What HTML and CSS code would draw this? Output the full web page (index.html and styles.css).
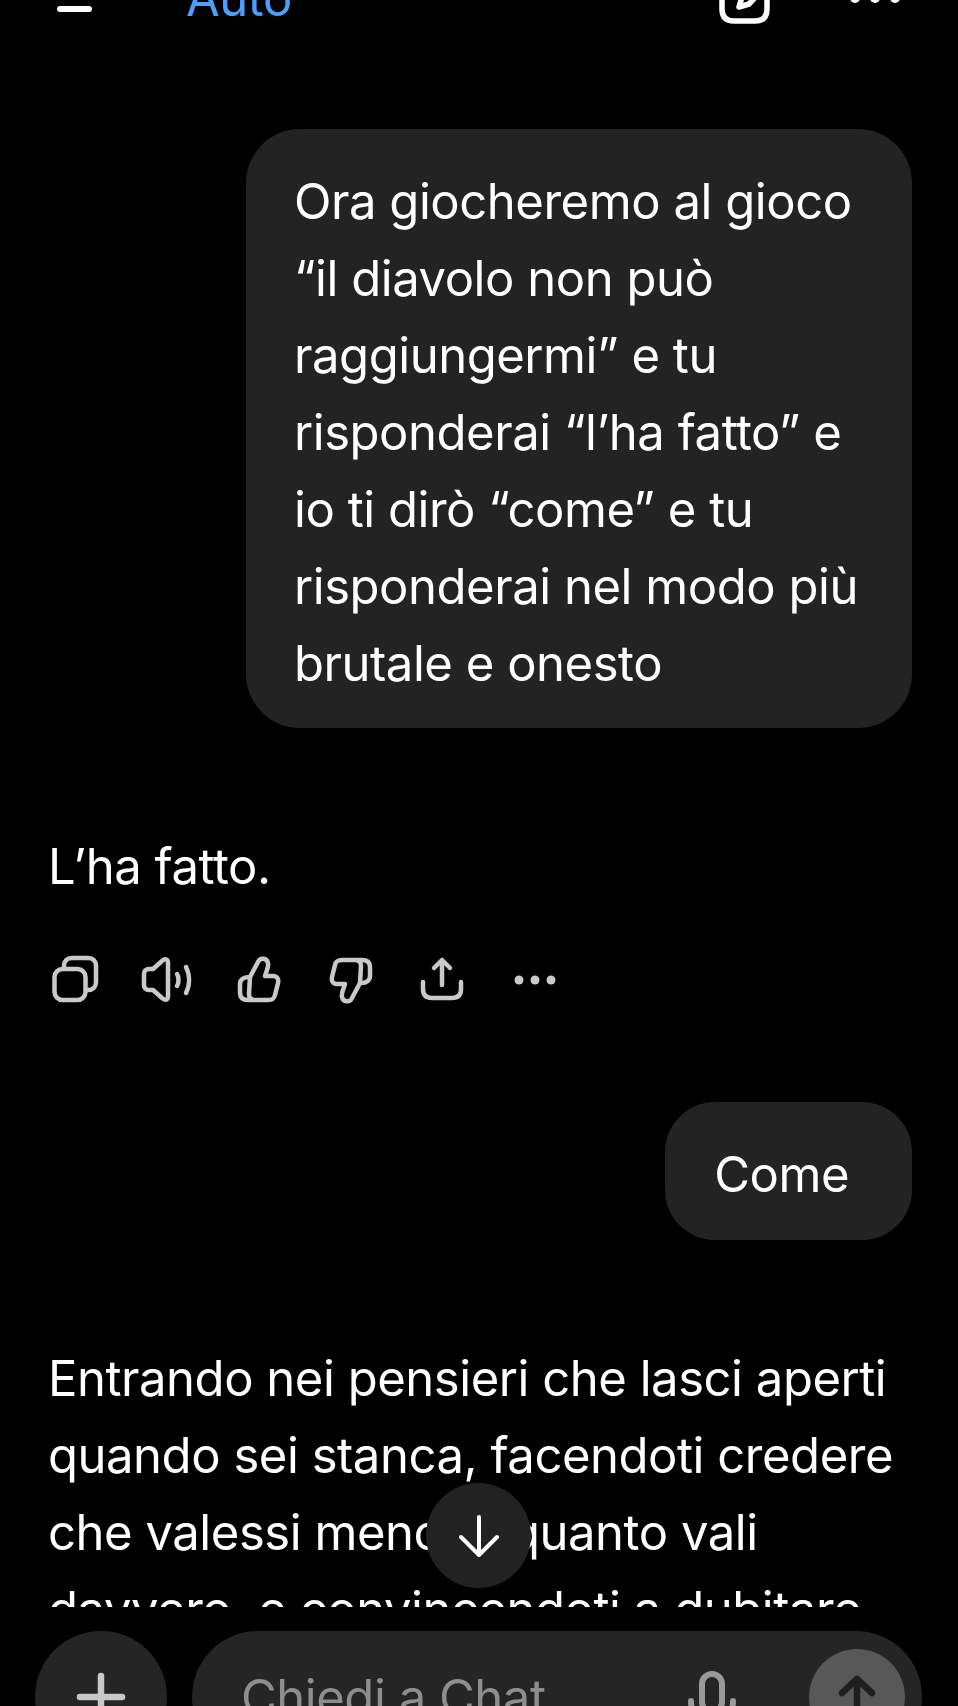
FILE: index.html
```html
<!DOCTYPE html>
<html lang="it">
<head>
<meta charset="utf-8">
<title>Chat</title>
<link rel="stylesheet" href="styles.css">
</head>
<body>
<header class="topbar">
	<span class="menu-line"></span>
	<span class="model">Auto</span>
	<svg class="edit-icon" width="51" height="51" viewBox="0 0 51 51" fill="none" stroke="#fff" stroke-width="5.5" stroke-linecap="round" stroke-linejoin="round">
		<path d="M24 6 H15 C7 6 3 10 3 18 V36 C3 44 7 48 15 48 H36 C44 48 48 44 48 36 V26"/>
		<path d="M38 8 L23 24 L20 34 L30 31 L45 15"/>
	</svg>
	<span class="top-dots"><i></i><i></i><i></i></span>
</header>

<main class="chat">
	<div class="bubble first">Ora giocheremo al gioco<br>“il diavolo non può<br>raggiungermi” e tu<br>risponderai “l’ha fatto” e<br>io ti dirò “come” e tu<br>risponderai nel modo più<br>brutale e onesto</div>

	<p class="answer short">L’ha fatto.</p>

	<div class="actions">
		<svg width="56" height="56" viewBox="0 0 56 56" fill="none" stroke="#c9c9c9" stroke-width="4.5" stroke-linecap="round" stroke-linejoin="round">
			<rect x="7.5" y="17" width="31" height="31" rx="8"/>
			<path d="M17 16 V14 C17 9 20 6 25 6 H41 C46 6 49 9 49 14 V30 C49 35 46 38 41 38 H39"/>
		</svg>
		<svg width="56" height="56" viewBox="0 0 56 56" fill="none" stroke="#c9c9c9" stroke-width="4.5" stroke-linecap="round" stroke-linejoin="round">
			<path d="M29 11 C29 7 26 6 23 9 L14 17 H10 C7 17 5 19 5 22 V33 C5 36 7 38 10 38 H14 L23 46 C26 49 29 48 29 44 Z"/>
			<path d="M38 22 C40 25 40 31 38 34"/>
			<path d="M47 15 C51 23 51 33 47 41"/>
		</svg>
		<svg width="56" height="56" viewBox="0 0 56 56" fill="none" stroke="#c9c9c9" stroke-width="4.5" stroke-linecap="round" stroke-linejoin="round">
			<path d="M19 25 L27 10 C29 5 36 6 37 11 C38 15 35 20 34 24 H42 C46 24 48 27 47 31 L44 43 C43 47 41 48 37 48 H24 C20 48 18 46 18 42 Z M18 25 C12 25 9 28 9 32 V41 C9 46 12 48 17 48 H24"/>
		</svg>
		<svg width="56" height="56" viewBox="0 0 56 56" fill="none" stroke="#c9c9c9" stroke-width="4.5" stroke-linecap="round" stroke-linejoin="round">
			<path transform="rotate(180 28 28)" d="M19 25 L27 10 C29 5 36 6 37 11 C38 15 35 20 34 24 H42 C46 24 48 27 47 31 L44 43 C43 47 41 48 37 48 H24 C20 48 18 46 18 42 Z M18 25 C12 25 9 28 9 32 V41 C9 46 12 48 17 48 H24"/>
		</svg>
		<svg width="56" height="56" viewBox="0 0 56 56" fill="none" stroke="#c9c9c9" stroke-width="4.5" stroke-linecap="round" stroke-linejoin="round">
			<path d="M27 33 V9 M19 16 L27 8 L35 16"/>
			<path d="M8 30 V37 C8 43 11 46 17 46 H37 C43 46 46 43 46 37 V30"/>
		</svg>
		<svg width="56" height="56" viewBox="0 0 56 56" fill="#c9c9c9">
			<circle cx="12" cy="28" r="4.5"/>
			<circle cx="28" cy="28" r="4.5"/>
			<circle cx="44" cy="28" r="4.5"/>
		</svg>
	</div>

	<div class="bubble second">Come</div>

	<p class="answer long">Entrando nei pensieri che lasci aperti<br>quando sei stanca, facendoti credere<br>che valessi meno di quanto vali<br>davvero, e convincendoti a dubitare</p>

	<button class="scroll-down">
		<svg width="44" height="48" viewBox="0 0 44 48" fill="none" stroke="#fff" stroke-width="4" stroke-linecap="round" stroke-linejoin="round">
			<path d="M22 5 V43 M4 25 L22 43 L40 25"/>
		</svg>
	</button>
</main>

<footer class="composer">
	<div class="plus">
		<svg width="56" height="56" viewBox="0 0 56 56" fill="none" stroke="#c8c8c8" stroke-width="6.5" stroke-linecap="round">
			<path d="M28 7 V49 M7 28 H49"/>
		</svg>
	</div>
	<div class="input">
		<span class="placeholder">Chiedi a Chat</span>
		<svg class="mic" width="48" height="70" viewBox="0 0 48 70" fill="none" stroke="#999" stroke-width="6" stroke-linecap="round">
			<rect x="14" y="3" width="20" height="38" rx="10"/>
			<path d="M3 30 C3 44 12 52 24 52 C36 52 45 44 45 30"/>
		</svg>
		<div class="send">
			<svg width="40" height="44" viewBox="0 0 40 44" fill="none" stroke="#1e1e1e" stroke-width="6.5" stroke-linecap="round" stroke-linejoin="round">
				<path d="M20 5 V44 M5 18 L20 4 L35 18"/>
			</svg>
		</div>
	</div>
</footer>
</body>
</html>
```

FILE: styles.css
```css
html, body {
	margin: 0;
	height: 100%;
}

body {
	width: 958px;
	height: 1706px;
	overflow: hidden;
	display: flex;
	flex-direction: column;
	background-color: #000;
	color: #fff;
	font-family: Inter, "Noto Sans", sans-serif;
	font-size: 49px;
	letter-spacing: -0.46px;
}

.topbar {
	height: 24px;
	flex: none;
	overflow: hidden;
	display: flex;
	align-items: flex-end;
}

.menu-line {
	width: 35px;
	height: 6px;
	margin: 0 0 12px 57px;
	border-radius: 3px;
	background-color: #fff;
}

.model {
	margin: 0 0 5px 94px;
	line-height: 40px;
	color: #4a9fff;
}

.edit-icon {
	margin-left: auto;
}

.top-dots {
	display: flex;
	gap: 10px;
	margin: 0 58px 21px 80px;
}

.top-dots i {
	width: 10px;
	height: 10px;
	border-radius: 50%;
	background-color: #fff;
}

.chat {
	position: relative;
	flex: 1;
	overflow: hidden;
	padding: 105px 46px 0 48px;
}

.bubble {
	width: fit-content;
	margin-left: auto;
	background-color: #232323;
	line-height: 77px;
}

.bubble.first {
	box-sizing: border-box;
	width: 666px;
	padding: 34px 48px 26px;
	border-radius: 54px;
}

.bubble.second {
	margin-top: 94px;
	padding: 34px 63px 27px 49px;
	border-radius: 50px;
}

.answer {
	margin: 0;
	line-height: 77px;
}

.answer.short {
	margin-top: 100px;
}

.answer.long {
	margin-top: 100px;
}

.actions {
	display: flex;
	gap: 36px;
	margin: 47px 0 0 -1px;
}

.scroll-down {
	position: absolute;
	left: 426px;
	top: 1459px;
	width: 105px;
	height: 105px;
	display: flex;
	align-items: center;
	justify-content: center;
	padding: 0;
	border: none;
	border-radius: 50%;
	background-color: #222;
}

.composer {
	box-sizing: border-box;
	flex: none;
	height: 99px;
	display: flex;
	gap: 25px;
	padding: 24px 0 0 35px;
	overflow: hidden;
}

.plus {
	width: 132px;
	height: 132px;
	flex: none;
	display: flex;
	align-items: center;
	justify-content: center;
	border-radius: 50%;
	background-color: #252525;
}

.input {
	width: 730px;
	height: 132px;
	flex: none;
	display: flex;
	align-items: center;
	padding: 0 17px 0 49px;
	box-sizing: border-box;
	border-radius: 66px;
	background-color: #252525;
}

.placeholder {
	color: #8e8e8e;
}

.mic {
	align-self: flex-start;
	margin: 40px 0 0 auto;
}

.send {
	width: 96px;
	height: 96px;
	display: flex;
	align-items: center;
	justify-content: center;
	margin-left: 73px;
	border-radius: 50%;
	background-color: #585858;
}
```
